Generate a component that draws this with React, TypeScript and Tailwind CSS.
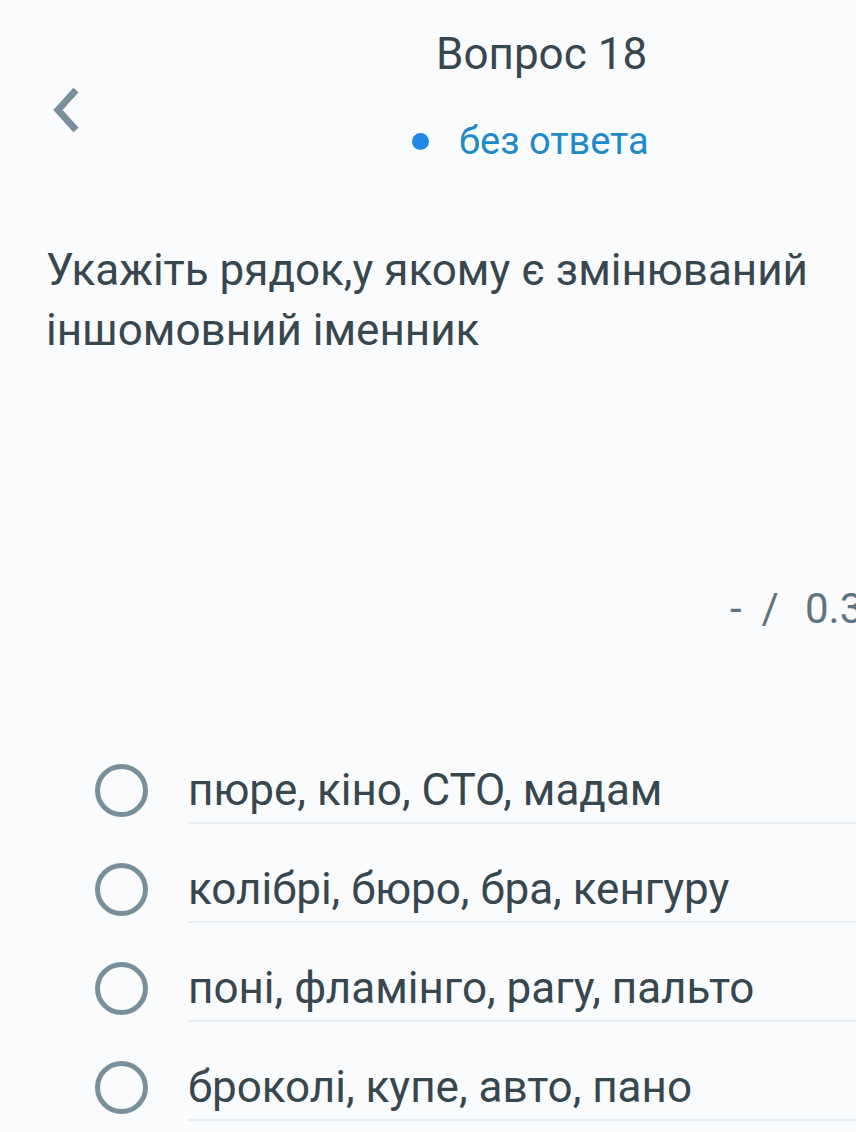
import React from "react";

const options = [
  "пюре, кіно, СТО, мадам",
  "колібрі, бюро, бра, кенгуру",
  "поні, фламінго, рагу, пальто",
  "броколі, купе, авто, пано",
];

export default function App() {
  return (
    <div
      className="w-[856px] h-[1132px] overflow-hidden bg-[#f9fbfc] text-[#37474f]"
      style={{ fontFamily: "Roboto, 'Noto Sans', sans-serif" }}
    >
      <div className="relative h-[200px]">
        <svg
          className="absolute left-[50px] top-[86px]"
          width="32"
          height="48"
          viewBox="0 0 32 48"
          fill="none"
        >
          <path d="M26 4 L8 24 L26 44" stroke="#78909c" strokeWidth="7" strokeLinejoin="miter" />
        </svg>
        <div className="pl-[436px] pt-[27px] text-[44px] leading-[54px] text-[#37474f]">
          Вопрос 18
        </div>
        <div className="flex items-center pl-[412px] pt-[38px] text-[38px] leading-[44px] text-[#1f8ac9]">
          <span className="w-[17px] h-[17px] rounded-full bg-[#1e88e5] mr-[30px]" />
          <span>без ответа</span>
        </div>
      </div>

      <div className="pl-[46px] pt-[40px] text-[44px] leading-[60px] whitespace-nowrap">
        <div>Укажіть рядок,у якому є змінюваний</div>
        <div>іншомовний іменник</div>
      </div>

      <div className="flex pl-[730px] pt-[224px] text-[42px] leading-[50px] whitespace-nowrap text-[#5f7480]">
        <span>-</span>
        <span className="ml-[20px]">/</span>
        <span className="ml-[26px]">0.3</span>
      </div>

      <div className="pt-[91px]">
        {options.map((o) => (
          <div key={o} className="flex h-[99px] items-stretch">
            <div className="w-[188px] flex items-center pl-[95px] pt-[32px]">
              <span className="block w-[53px] h-[53px] rounded-full border-[5px] border-[#78909c] shrink-0" />
            </div>
            <div className="flex-1 border-b-2 border-[#eceff1] flex items-center pt-[32px] text-[44px] whitespace-nowrap">
              {o}
            </div>
          </div>
        ))}
      </div>
    </div>
  );
}
